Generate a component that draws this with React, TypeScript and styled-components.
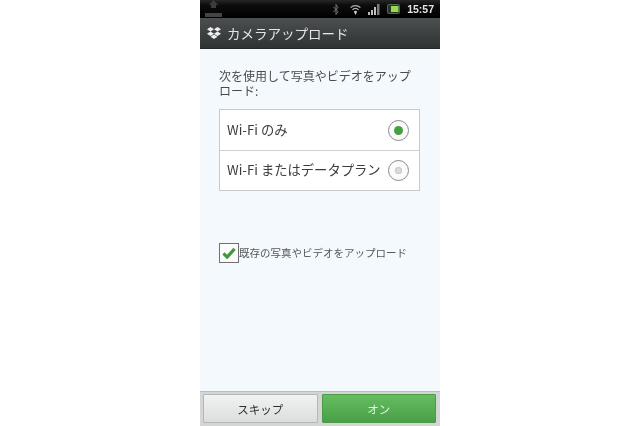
import React from 'react'
import styled, { createGlobalStyle } from 'styled-components'
import { FaDropbox } from 'react-icons/fa'

const GlobalStyle = createGlobalStyle`
  html, body {
    margin: 0;
    padding: 0;
    background: #ffffff;
  }
`

const Page = styled.div`
  width: 640px;
  height: 426px;
  display: flex;
  justify-content: center;
  overflow: hidden;
  font-family: "Noto Sans CJK JP", "Liberation Sans", sans-serif;
`

const Phone = styled.div`
  width: 240px;
  height: 426px;
  display: flex;
  flex-direction: column;
  background: #f4f9fe;
  filter: blur(0.4px);
`

const StatusBar = styled.div`
  height: 18px;
  flex: none;
  display: flex;
  align-items: center;
  padding: 0 6px 0 5px;
  background: linear-gradient(#262626 0, #0c0c0c 30%, #000 100%);
`

const StatusIcons = styled.div`
  margin-left: auto;
  display: flex;
  align-items: center;
`

const StatusIcon = styled.svg<{ $gap: number }>`
  display: block;
  margin-right: ${(p) => p.$gap}px;
`

const Clock = styled.span`
  font-family: "Liberation Sans", sans-serif;
  font-size: 10.5px;
  font-weight: 700;
  color: #e4e4e4;
  line-height: 18px;
`

const TitleBar = styled.div`
  height: 31px;
  flex: none;
  display: flex;
  align-items: center;
  gap: 6px;
  padding-left: 7px;
  box-sizing: border-box;
  background: linear-gradient(#4c4f50 0, #3e4142 50%, #303334 100%);
  border-bottom: 1px solid #26292a;
`

const Logo = styled(FaDropbox)`
  width: 14px;
  height: 14px;
  color: #eef0f0;
  flex: none;
`

const Title = styled.span`
  font-size: 13.5px;
  color: #e4e6e6;
  line-height: 18px;
`

const Content = styled.div`
  flex: 1;
  min-height: 0;
  display: flex;
  flex-direction: column;
  padding: 20px 19px 0;
`

const Lead = styled.p`
  margin: 0 0 11px;
  font-size: 12px;
  line-height: 14.5px;
  color: #4a4a4a;
`

const OptionList = styled.div`
  width: 201px;
  border: 1px solid #c6cacc;
  background: #ffffff;
  box-sizing: border-box;
`

const OptionRow = styled.div`
  height: 40px;
  box-sizing: border-box;
  display: flex;
  align-items: center;
  justify-content: space-between;
  padding: 0 10px 0 7px;
  font-size: 13.3px;
  color: #3c3c3c;
  white-space: nowrap;
  & + & {
    border-top: 1px solid #cdd1d3;
  }
`

const OptionLabel = styled.span`
  padding-bottom: 2px;
`

const Radio = styled.span`
  width: 21px;
  height: 21px;
  flex: none;
  box-sizing: border-box;
  border-radius: 50%;
  border: 1.5px solid #8a8a8a;
  background: #fbfbfb;
  display: flex;
  align-items: center;
  justify-content: center;
`

const RadioDot = styled.span<{ $on: boolean }>`
  width: ${(p) => (p.$on ? 9 : 7)}px;
  height: ${(p) => (p.$on ? 9 : 7)}px;
  border-radius: 50%;
  background: ${(p) => (p.$on ? '#45a042' : '#dcdcdc')};
  box-shadow: ${(p) => (p.$on ? 'none' : 'inset 0 0 0 1px #c8c8c8')};
`

const CheckRow = styled.div`
  display: flex;
  align-items: center;
  margin-top: 52px;
`

const CheckBox = styled.span`
  width: 20px;
  height: 20px;
  flex: none;
  box-sizing: border-box;
  border: 1.5px solid #6f7172;
  background: #fcfcfc;
  display: flex;
  align-items: center;
  justify-content: center;
`

const CheckLabel = styled.span`
  font-size: 10.5px;
  color: #55585a;
  line-height: 20px;
  white-space: nowrap;
`

const BottomBar = styled.div`
  height: 35px;
  flex: none;
  display: flex;
  gap: 4px;
  padding: 2px 4px 3px 3px;
  box-sizing: border-box;
  background: #d4d5d5;
  border-top: 1px solid #bcbdbd;
`

const ActionButton = styled.div<{ $primary?: boolean }>`
  flex: 1;
  display: flex;
  align-items: center;
  justify-content: center;
  font-size: 11.5px;
  border-radius: 1px;
  color: ${(p) => (p.$primary ? '#e6f3e4' : '#2e2e2e')};
  background: ${(p) =>
    p.$primary
      ? 'linear-gradient(#66bd60, #48a047)'
      : 'linear-gradient(#f1f2f2, #dcdddd)'};
  border: 1px solid ${(p) => (p.$primary ? '#4b9a48' : '#b5b6b6')};
`

const App = () => {
  return (
    <Page>
      <GlobalStyle />
      <Phone>
        <StatusBar>
          <svg width="17" height="18" viewBox="0 0 17 18">
            <path d="M8.5 0 L13 5 H11 V8 H6 V5 H4 Z" fill="#3c3c3c" />
            <rect x="0" y="13" width="17" height="4" fill="#444444" />
          </svg>
          <StatusIcons>
            <StatusIcon $gap={11} width="6" height="11" viewBox="0 0 6 11">
              <path d="M0.5 3 L5 7.5 L3 10.5 V0.5 L5 3.5 L0.5 8" fill="none" stroke="#777777" strokeWidth="1" />
            </StatusIcon>
            <StatusIcon $gap={7} width="11" height="11" viewBox="0 0 11 11">
              <path d="M0.6 3.6 A7 7 0 0 1 10.4 3.6" fill="none" stroke="#b0b0b0" strokeWidth="1.3" />
              <path d="M2.5 5.8 A4.4 4.4 0 0 1 8.5 5.8" fill="none" stroke="#b8b8b8" strokeWidth="1.3" />
              <path d="M3.8 7.6 L5.5 11 L7.2 7.6 A2.4 2.4 0 0 0 3.8 7.6 Z" fill="#cccccc" />
            </StatusIcon>
            <StatusIcon $gap={7} width="12" height="11" viewBox="0 0 12 11">
              <rect x="0" y="8" width="2" height="3" fill="#b8b8b8" />
              <rect x="3" y="6" width="2" height="5" fill="#c0c0c0" />
              <rect x="6" y="3" width="2" height="8" fill="#c0c0c0" />
              <rect x="9" y="0" width="2.5" height="11" fill="#7c7c7c" />
            </StatusIcon>
            <StatusIcon $gap={7} width="13" height="10" viewBox="0 0 13 10">
              <rect x="0.5" y="0.5" width="12" height="9" rx="1" fill="#24382a" stroke="#52665a" />
              <rect x="4" y="2" width="7.5" height="6" fill="#9bd84e" />
            </StatusIcon>
            <Clock>15:57</Clock>
          </StatusIcons>
        </StatusBar>
        <TitleBar>
          <Logo />
          <Title>カメラアップロード</Title>
        </TitleBar>
        <Content>
          <Lead>次を使用して写真やビデオをアップロード:</Lead>
          <OptionList>
            <OptionRow>
              <OptionLabel>Wi-Fi のみ</OptionLabel>
              <Radio>
                <RadioDot $on />
              </Radio>
            </OptionRow>
            <OptionRow>
              <OptionLabel>Wi-Fi またはデータプラン</OptionLabel>
              <Radio>
                <RadioDot $on={false} />
              </Radio>
            </OptionRow>
          </OptionList>
          <CheckRow>
            <CheckBox>
              <svg width="14" height="12" viewBox="0 0 15 13">
                <path d="M1.5 7 L5.5 11 L13.5 2" fill="none" stroke="#3f9a3e" strokeWidth="3.4" />
              </svg>
            </CheckBox>
            <CheckLabel>既存の写真やビデオをアップロード</CheckLabel>
          </CheckRow>
        </Content>
        <BottomBar>
          <ActionButton>スキップ</ActionButton>
          <ActionButton $primary>オン</ActionButton>
        </BottomBar>
      </Phone>
    </Page>
  )
}

export default App
